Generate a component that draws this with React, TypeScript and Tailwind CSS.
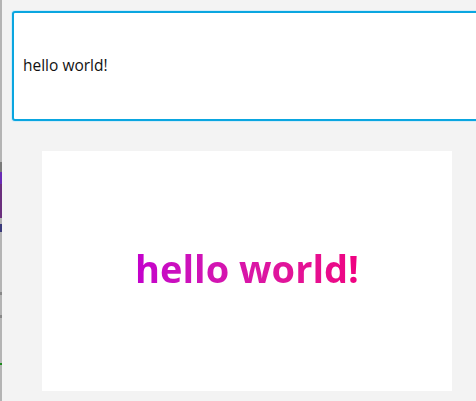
export default function App() {
	return (
		<div className="flex h-[401px] w-[476px] overflow-hidden bg-[#f3f3f3] font-['Open_Sans',sans-serif]">
			<div className="flex w-[2px] shrink-0 flex-col bg-[#b4b4b4]">
				<div className="mt-[162px] h-[10px] bg-[#7a7a7a]" />
				<div className="h-[12px] bg-[#6a2bb5]" />
				<div className="h-[34px] bg-[#6b2f7d]" />
				<div className="mt-[6px] h-[8px] bg-[#3a3a7a]" />
				<div className="mt-[60px] h-[3px] bg-[#888]" />
				<div className="mt-[20px] h-[3px] bg-[#888]" />
				<div className="mt-[45px] h-[2px] bg-[#1a8a1a]" />
			</div>
			<div className="flex min-w-0 flex-1 flex-col items-start overflow-hidden">
				<div className="ml-[10px] mt-[11px] flex h-[110px] w-[520px] shrink-0 items-center rounded-[3px] border-2 border-[#0aa6e0] bg-white px-[9px] shadow-[0_0_0_1px_#d5ecf8]">
					<span className="text-[15.5px] text-[#111]">hello world!</span>
				</div>
				<div className="ml-[40px] mt-[30px] flex h-[240px] w-[410px] shrink-0 items-center justify-center bg-white">
					<span className="bg-gradient-to-r from-[#c300cc] to-[#f00080] bg-clip-text pb-[7px] text-[38px] font-bold leading-none text-transparent">
						hello world!
					</span>
				</div>
			</div>
		</div>
	);
}
